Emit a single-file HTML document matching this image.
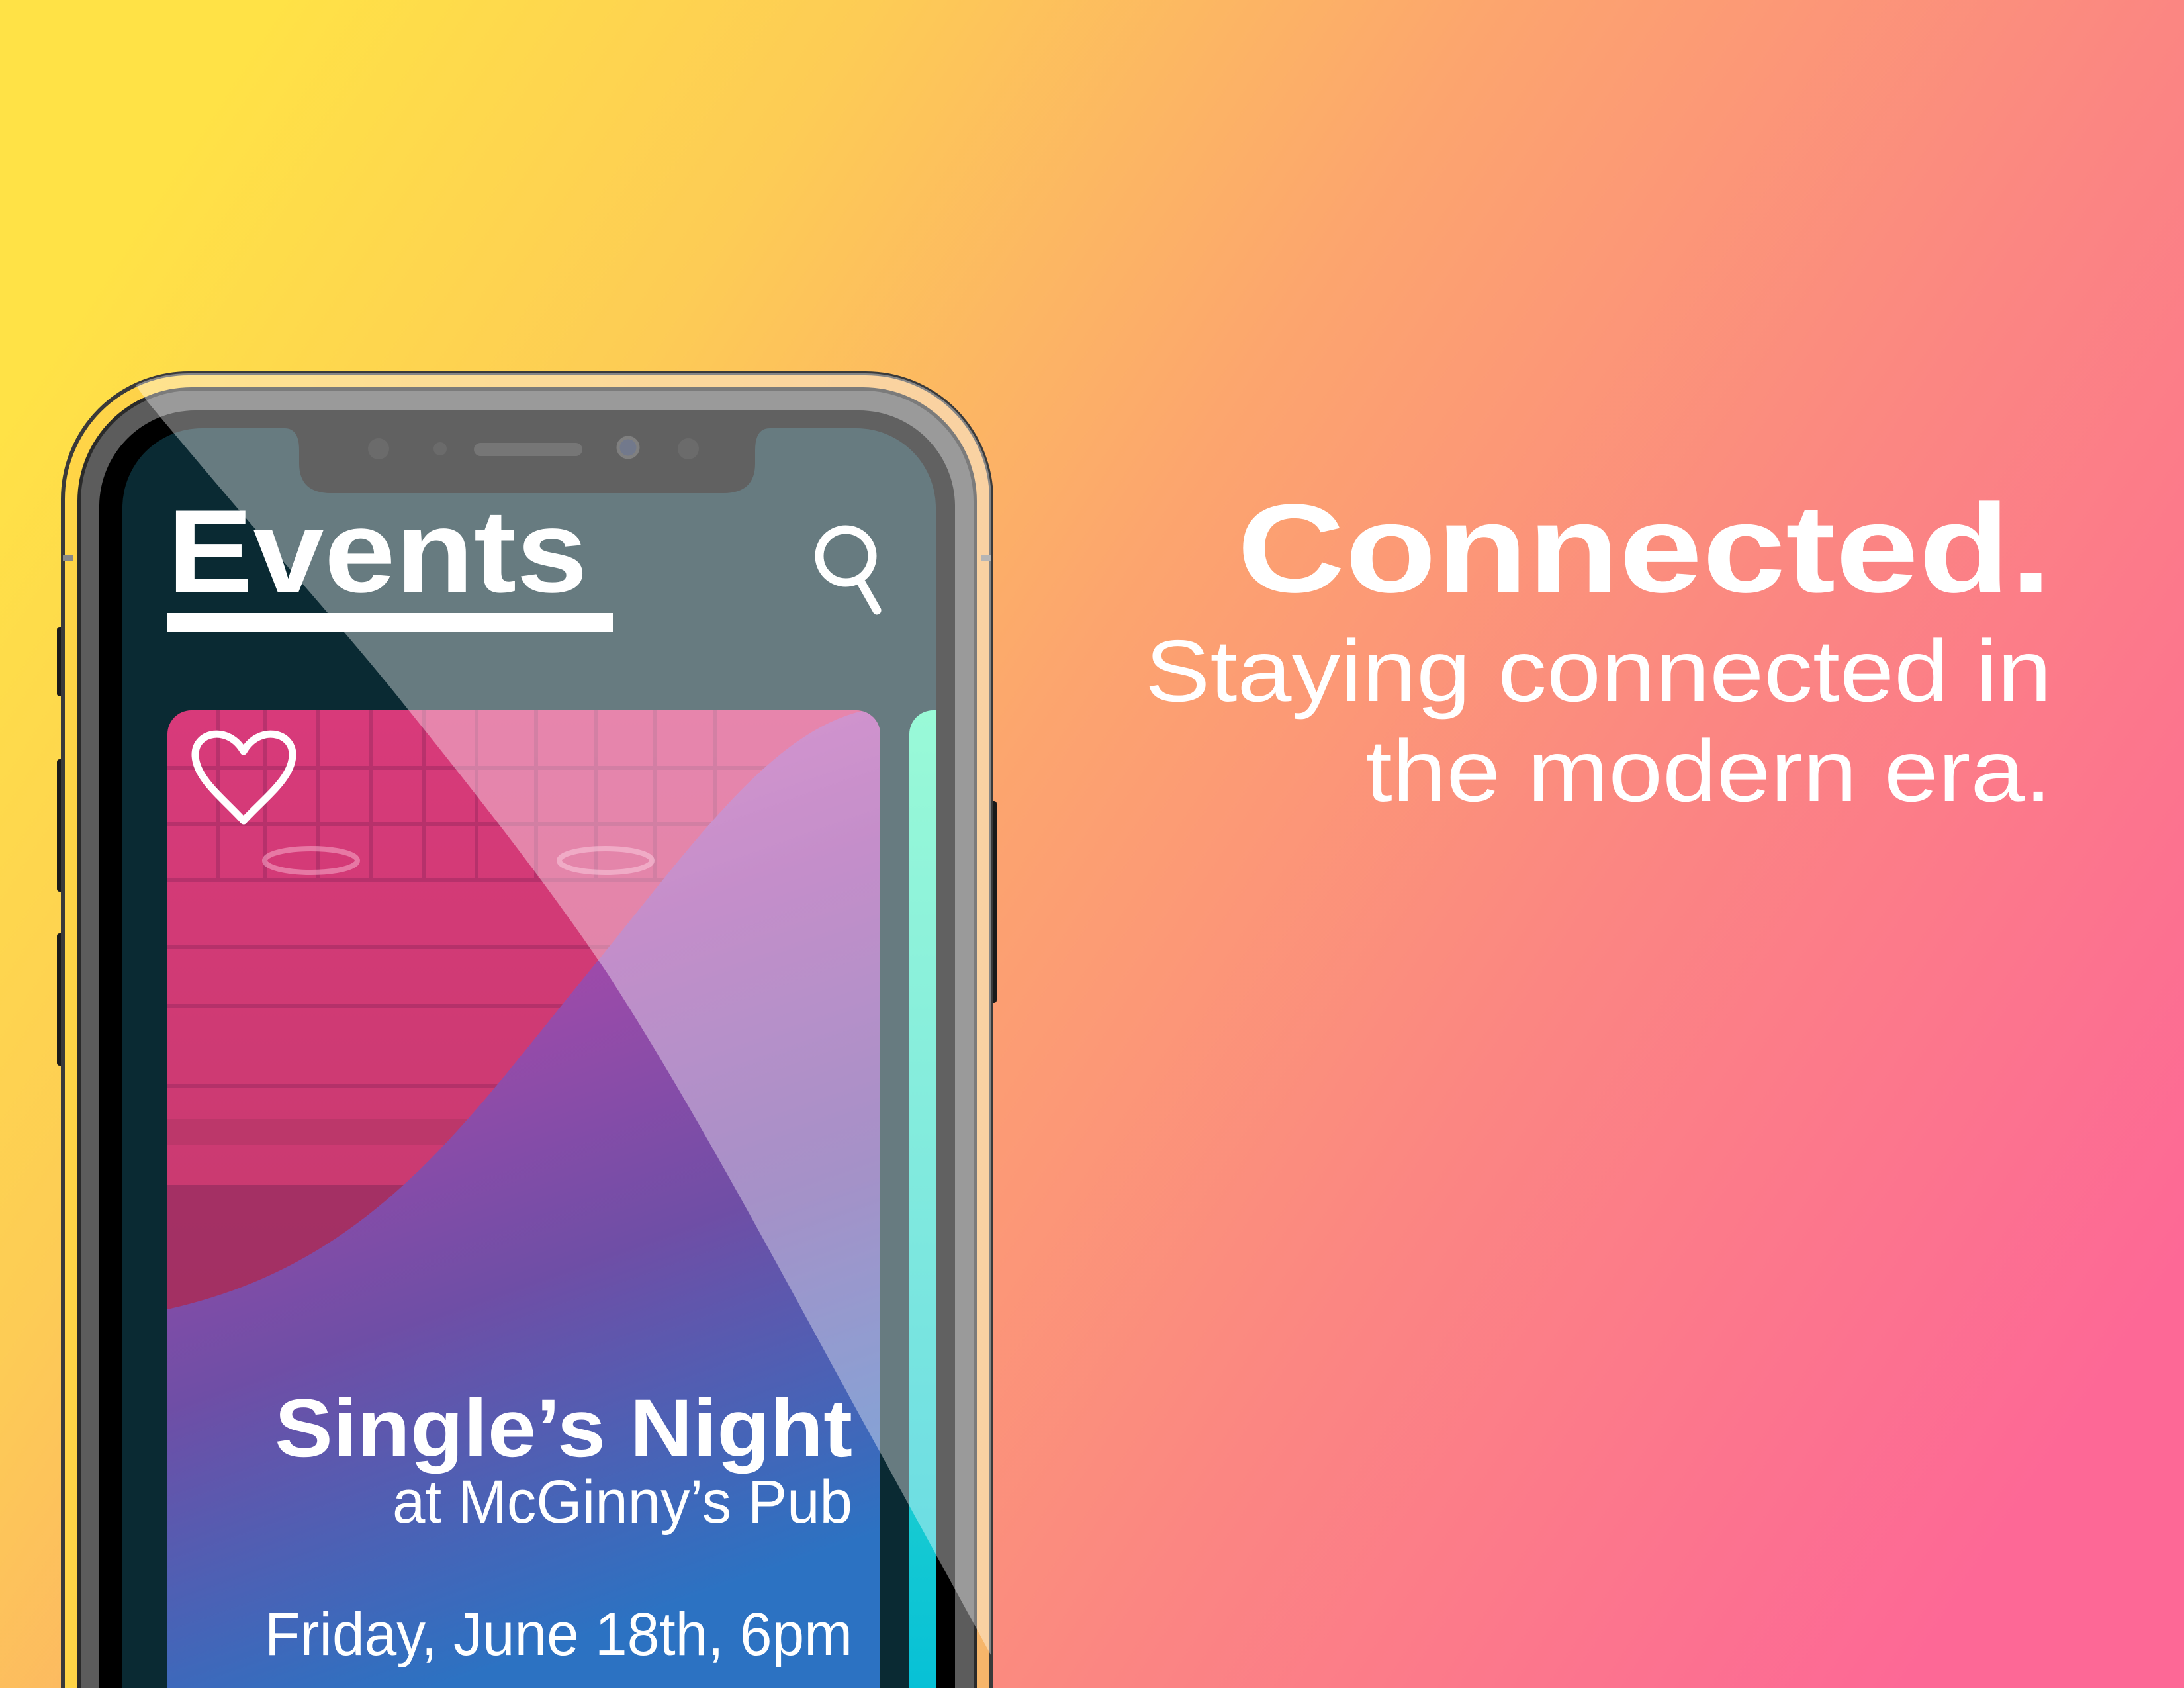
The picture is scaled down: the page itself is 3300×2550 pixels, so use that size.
<!DOCTYPE html>
<html><head><meta charset="utf-8"><style>html,body{margin:0;padding:0;width:3300px;height:2550px;overflow:hidden}svg{display:block;overflow:hidden}</style></head>
<body>
<svg width="3300" height="2550" viewBox="0 0 3300 2550" xmlns="http://www.w3.org/2000/svg">
<defs>
<linearGradient id="bg" x1="0" y1="0.25" x2="1" y2="0.75">
<stop offset="0" stop-color="#ffe246"/>
<stop offset="0.22" stop-color="#fdcc55"/>
<stop offset="0.45" stop-color="#fca56e"/>
<stop offset="0.7" stop-color="#fb8682"/>
<stop offset="1" stop-color="#fd6896"/>
</linearGradient>
<linearGradient id="wave" x1="0" y1="0" x2="0.25" y2="1">
<stop offset="0" stop-color="#d45fb8"/>
<stop offset="0.35" stop-color="#a24aaa"/>
<stop offset="0.65" stop-color="#6f4ea6"/>
<stop offset="1" stop-color="#2c72c2"/>
</linearGradient>
<linearGradient id="photo" x1="0" y1="0" x2="0" y2="1">
<stop offset="0" stop-color="#d83a7a"/>
<stop offset="0.6" stop-color="#c63a6e"/>
<stop offset="1" stop-color="#a23064"/>
</linearGradient>
<linearGradient id="sliver" x1="0" y1="0" x2="0" y2="1">
<stop offset="0" stop-color="#5cf7bf"/>
<stop offset="1" stop-color="#00bcd8"/>
</linearGradient>
<linearGradient id="gold" x1="0" y1="0" x2="1" y2="0">
<stop offset="0" stop-color="#ffd546"/>
<stop offset="1" stop-color="#f6b56a"/>
</linearGradient>
<clipPath id="all"><rect width="3300" height="2550"/></clipPath>
<clipPath id="phoneClip"><rect x="95" y="564" width="1403" height="2200" rx="190"/></clipPath>
<clipPath id="screenClip"><rect x="185" y="647" width="1229" height="2100" rx="120"/></clipPath>
<clipPath id="cardClip"><rect x="253" y="1073" width="1077" height="1600" rx="36"/></clipPath>
</defs>
<g clip-path="url(#all)">
<rect width="3300" height="2550" fill="url(#bg)"/>

<rect x="86" y="947" width="14" height="105" rx="4" fill="#1a1a1a"/>
<rect x="86" y="1147" width="14" height="200" rx="4" fill="#1a1a1a"/>
<rect x="86" y="1410" width="14" height="200" rx="4" fill="#1a1a1a"/>
<rect x="1494" y="1210" width="12" height="305" rx="4" fill="#1a1a1a"/>

<rect x="95" y="564" width="1403" height="2200" rx="190" fill="url(#gold)" stroke="#3a3a3a" stroke-width="6"/>
<rect x="117" y="585" width="1359" height="2200" rx="172" fill="#2a2a2a"/>
<rect x="122" y="590" width="1349" height="2200" rx="168" fill="#5c5c5c"/>
<rect x="150" y="620" width="1293" height="2200" rx="145" fill="#000"/>
<rect x="95" y="838" width="16" height="10" fill="#888"/>
<rect x="1482" y="838" width="16" height="10" fill="#888"/>

<g clip-path="url(#screenClip)">
<rect x="185" y="647" width="1229" height="2100" fill="#0a2a33"/>
<text x="253" y="894" font-family="Liberation Sans, sans-serif" font-weight="bold" font-size="178" fill="#fff" textLength="635" lengthAdjust="spacingAndGlyphs">Events</text>
<rect x="253" y="926" width="673" height="28" fill="#fff"/>
<circle cx="1278" cy="840" r="40" fill="none" stroke="#fff" stroke-width="13"/>
<line x1="1300" y1="878" x2="1325" y2="922" stroke="#fff" stroke-width="13" stroke-linecap="round"/>

<g clip-path="url(#cardClip)">
<rect x="253" y="1073" width="1077" height="1600" fill="url(#photo)"/>
<g stroke="#9a2a60" stroke-width="6" opacity="0.5">
<line x1="253" y1="1160" x2="1330" y2="1160"/>
<line x1="253" y1="1245" x2="1330" y2="1245"/>
<line x1="253" y1="1330" x2="1330" y2="1330"/>
<line x1="253" y1="1430" x2="1330" y2="1430"/>
<line x1="253" y1="1520" x2="1330" y2="1520"/>
<line x1="253" y1="1640" x2="1330" y2="1640"/>
<line x1="330" y1="1073" x2="330" y2="1330"/>
<line x1="400" y1="1073" x2="400" y2="1330"/>
<line x1="480" y1="1073" x2="480" y2="1330"/>
<line x1="560" y1="1073" x2="560" y2="1330"/>
<line x1="640" y1="1073" x2="640" y2="1330"/>
<line x1="720" y1="1073" x2="720" y2="1330"/>
<line x1="810" y1="1073" x2="810" y2="1330"/>
<line x1="900" y1="1073" x2="900" y2="1330"/>
<line x1="990" y1="1073" x2="990" y2="1330"/>
<line x1="1080" y1="1073" x2="1080" y2="1330"/>
</g>
<ellipse cx="470" cy="1300" rx="70" ry="18" fill="none" stroke="#f3a2c3" stroke-width="8" opacity="0.6"/>
<ellipse cx="915" cy="1300" rx="70" ry="18" fill="none" stroke="#f3a2c3" stroke-width="8" opacity="0.6"/>
<rect x="253" y="1690" width="1077" height="40" fill="#b03566" opacity="0.6"/>
<rect x="253" y="1790" width="1077" height="200" fill="#8a2a5c" opacity="0.6"/>
<path d="M253 1978 C 560 1910, 700 1700, 880 1480 S 1180 1080, 1340 1068 L 1340 2600 L 253 2600 Z" fill="url(#wave)"/>
<path d="M295 1140 C 295 1105, 345 1095, 368 1135 C 391 1095, 442 1105, 442 1140 C 442 1175, 400 1205, 368 1240 C 336 1205, 295 1175, 295 1140 Z" fill="none" stroke="#fff" stroke-width="11" stroke-linejoin="round"/>
<text x="1288" y="2200" text-anchor="end" font-family="Liberation Sans, sans-serif" font-weight="bold" font-size="124" fill="#fff" textLength="873" lengthAdjust="spacingAndGlyphs">Single’s Night</text>
<text x="1288" y="2300" text-anchor="end" font-family="Liberation Sans, sans-serif" font-size="92" fill="#fff" textLength="695" lengthAdjust="spacingAndGlyphs">at McGinny’s Pub</text>
<text x="1288" y="2500" text-anchor="end" font-family="Liberation Sans, sans-serif" font-size="92" fill="#fff" textLength="888" lengthAdjust="spacingAndGlyphs">Friday, June 18th, 6pm</text>
</g>
<rect x="1374" y="1073" width="80" height="1600" rx="36" fill="url(#sliver)"/>
</g>

<path d="M430 647 Q452 647 452 680 L452 700 Q452 745 500 745 L1093 745 Q1141 745 1141 700 L1141 680 Q1141 647 1163 647 Z" fill="#000"/>
<rect x="716" y="669" width="164" height="20" rx="10" fill="#222"/>
<circle cx="949" cy="676" r="15" fill="#1c2846" stroke="#333" stroke-width="5"/>
<circle cx="572" cy="678" r="16" fill="#111"/>
<circle cx="665" cy="678" r="10" fill="#111"/>
<circle cx="1040" cy="678" r="16" fill="#111"/>

<g clip-path="url(#phoneClip)">
<path d="M175 540 L223 607 C 400 820, 520 950, 616 1071 C 720 1200, 830 1340, 918 1471 C 1060 1690, 1200 1960, 1332 2198 L 1530 2560 L 1530 540 Z" fill="#fff" opacity="0.38"/>
</g>

<text x="3100" y="894" text-anchor="end" font-family="Liberation Sans, sans-serif" font-weight="bold" font-size="190" fill="#fff" textLength="1231" lengthAdjust="spacingAndGlyphs">Connected.</text>
<text x="3100" y="1059" text-anchor="end" font-family="Liberation Sans, sans-serif" font-size="132" fill="#fff" textLength="1370" lengthAdjust="spacingAndGlyphs">Staying connected in</text>
<text x="3100" y="1210" text-anchor="end" font-family="Liberation Sans, sans-serif" font-size="132" fill="#fff" textLength="1037" lengthAdjust="spacingAndGlyphs">the modern era.</text>
</g>
</svg>
</body></html>
